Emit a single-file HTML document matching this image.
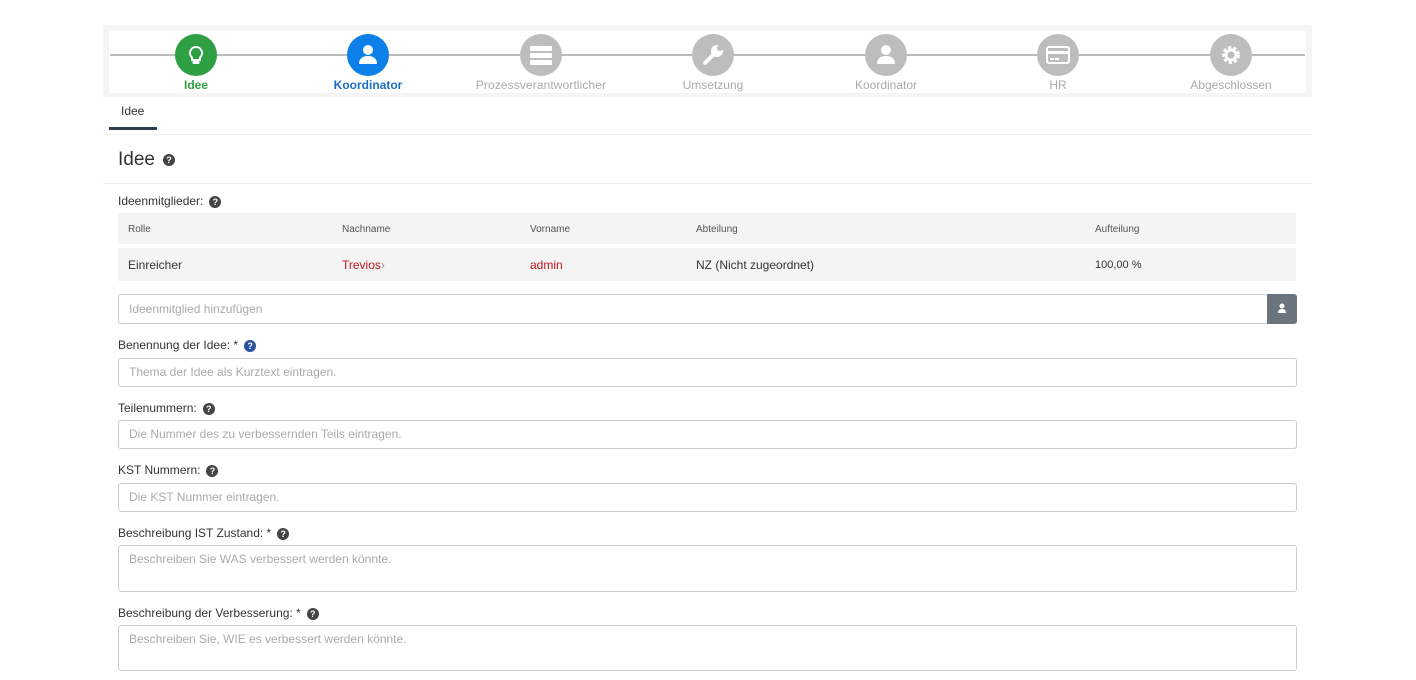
<!DOCTYPE html>
<html><head><meta charset="utf-8"><style>
*{box-sizing:border-box;margin:0;padding:0}
body{width:1416px;height:680px;background:#fff;font-family:"Liberation Sans",sans-serif;color:#333;position:relative;overflow:hidden}
.a{position:absolute}
.step{position:absolute;top:34px;width:160px;margin-left:-80px;text-align:center}
.c{width:42px;height:42px;border-radius:50%;background:#bdbdbd;margin:0 auto;position:relative}
.step .l{font-size:12px;color:#aaa;margin-top:2px;font-weight:bold;letter-spacing:0}
.q{display:inline-block;width:12px;height:12px;border-radius:50%;background:#444;color:#fff;font-size:9px;font-weight:bold;text-align:center;line-height:12px;vertical-align:middle;margin-left:6px}
.lab{position:absolute;left:118px;font-size:12px;color:#333}
.inp{position:absolute;left:118px;width:1179px;border:1px solid #ccc;border-radius:3px;font-size:12px;color:#aaa;padding:0 10px}
.th{font-size:10px;color:#555;position:absolute;top:224px}
.td{font-size:12px;position:absolute;top:258px}
</style></head><body>
<div class="a" style="left:103px;top:25px;width:1209px;height:72px;background:#f5f5f5"></div>
<div class="a" style="left:109px;top:31px;width:1197px;height:62px;background:#fff"></div>
<div class="a" style="left:110px;top:54px;width:1195px;height:2px;background:#bbb"></div>

<div class="step" style="left:196px"><div class="c" style="background:#2ea043">
<svg width="42" height="42" viewBox="0 0 42 42"><path d="M21 13a6 6 0 0 0-4 10.5v2.5h8v-2.5A6 6 0 0 0 21 13z" fill="none" stroke="#fff" stroke-width="2"/><rect x="17.5" y="27" width="7" height="3" rx="1" fill="#fff"/></svg></div><div class="l" style="color:#2ea043">Idee</div></div>
<div class="step" style="left:368px"><div class="c" style="background:#0d7fe8">
<svg width="42" height="42" viewBox="0 0 42 42"><circle cx="21" cy="16" r="5" fill="#fff"/><path d="M12 30c0-6 4-8 9-8s9 2 9 8z" fill="#fff"/></svg></div><div class="l" style="color:#1a6fc4">Koordinator</div></div>
<div class="step" style="left:541px"><div class="c">
<svg width="42" height="42" viewBox="0 0 42 42"><rect x="10" y="12" width="22" height="5" rx="1" fill="#fff"/><rect x="10" y="19" width="22" height="5" rx="1" fill="#fff"/><rect x="10" y="26" width="22" height="5" rx="1" fill="#fff"/></svg></div><div class="l" style="font-weight:normal;letter-spacing:.1px">Prozessverantwortlicher</div></div>
<div class="step" style="left:713px"><div class="c">
<svg width="42" height="42" viewBox="0 0 42 42"><path d="M13 29l9-9" stroke="#fff" stroke-width="4" stroke-linecap="round"/><circle cx="25" cy="17" r="6" fill="#fff"/><circle cx="28" cy="14" r="3" fill="#bdbdbd"/></svg></div><div class="l" style="font-weight:normal">Umsetzung</div></div>
<div class="step" style="left:886px"><div class="c">
<svg width="42" height="42" viewBox="0 0 42 42"><circle cx="21" cy="16" r="5" fill="#fff"/><path d="M12 30c0-6 4-8 9-8s9 2 9 8z" fill="#fff"/></svg></div><div class="l" style="font-weight:normal">Koordinator</div></div>
<div class="step" style="left:1058px"><div class="c">
<svg width="42" height="42" viewBox="0 0 42 42"><rect x="10" y="13" width="22" height="16" rx="2" fill="none" stroke="#fff" stroke-width="2"/><rect x="10" y="17" width="22" height="3" fill="#fff"/><rect x="13" y="24" width="4" height="2" fill="#fff"/><rect x="18" y="24" width="4" height="2" fill="#fff"/></svg></div><div class="l" style="font-weight:normal">HR</div></div>
<div class="step" style="left:1231px"><div class="c">
<svg width="42" height="42" viewBox="0 0 42 42"><circle cx="21" cy="21" r="7" fill="none" stroke="#fff" stroke-width="4" stroke-dasharray="3 2"/><circle cx="21" cy="21" r="5" fill="none" stroke="#fff" stroke-width="3"/></svg></div><div class="l" style="font-weight:normal">Abgeschlossen</div></div>

<div class="a" style="left:121px;top:104px;font-size:12px;color:#333">Idee</div>
<div class="a" style="left:109px;top:127px;width:48px;height:3px;background:#2c3e50"></div>
<div class="a" style="left:103px;top:134px;width:1209px;height:1px;background:#eee"></div>
<div class="a" style="left:118px;top:149px;font-size:19px;color:#333">Idee<span class="q" style="margin-left:8px">?</span></div>
<div class="a" style="left:103px;top:183px;width:1209px;height:1px;background:#eee"></div>

<div class="lab" style="top:194px">Ideenmitglieder:<span class="q">?</span></div>
<div class="a" style="left:118px;top:213px;width:1178px;height:31px;background:#f4f4f4"></div>
<div class="a" style="left:118px;top:248px;width:1178px;height:33px;background:#f4f4f4"></div>
<div class="th" style="left:128px">Rolle</div><div class="th" style="left:342px">Nachname</div><div class="th" style="left:530px">Vorname</div><div class="th" style="left:696px">Abteilung</div><div class="th" style="left:1095px">Aufteilung</div>
<div class="td" style="left:128px">Einreicher</div><div class="td" style="left:342px;color:#c0161d">Trevios<span style="color:#88a">›</span></div><div class="td" style="left:530px;color:#c0161d">admin</div><div class="td" style="left:696px">NZ (Nicht zugeordnet)</div><div class="td" style="left:1095px;font-size:11px;top:259px">100,00 %</div>

<div class="inp" style="top:294px;height:30px;line-height:28px;width:1150px">Ideenmitglied hinzufügen</div>
<div class="a" style="left:1267px;top:294px;width:30px;height:30px;background:#6c757d;border-radius:0 3px 3px 0"><svg width="30" height="30"><circle cx="15" cy="12" r="2.5" fill="#fff"/><path d="M11 19c0-3 2-4 4-4s4 1 4 4z" fill="#fff"/></svg></div>

<div class="lab" style="top:338px">Benennung der Idee: *<span class="q" style="background:#2a4f9c">?</span></div>
<div class="inp" style="top:358px;height:29px;line-height:27px">Thema der Idee als Kurztext eintragen.</div>
<div class="lab" style="top:401px">Teilenummern:<span class="q">?</span></div>
<div class="inp" style="top:420px;height:29px;line-height:27px">Die Nummer des zu verbessernden Teils eintragen.</div>
<div class="lab" style="top:463px">KST Nummern:<span class="q">?</span></div>
<div class="inp" style="top:483px;height:29px;line-height:27px">Die KST Nummer eintragen.</div>
<div class="lab" style="top:526px">Beschreibung IST Zustand: *<span class="q">?</span></div>
<div class="inp" style="top:545px;height:47px;padding-top:6px">Beschreiben Sie WAS verbessert werden könnte.</div>
<div class="lab" style="top:606px">Beschreibung der Verbesserung: *<span class="q">?</span></div>
<div class="inp" style="top:625px;height:46px;padding-top:6px">Beschreiben Sie, WIE es verbessert werden könnte.</div>
</body></html>
